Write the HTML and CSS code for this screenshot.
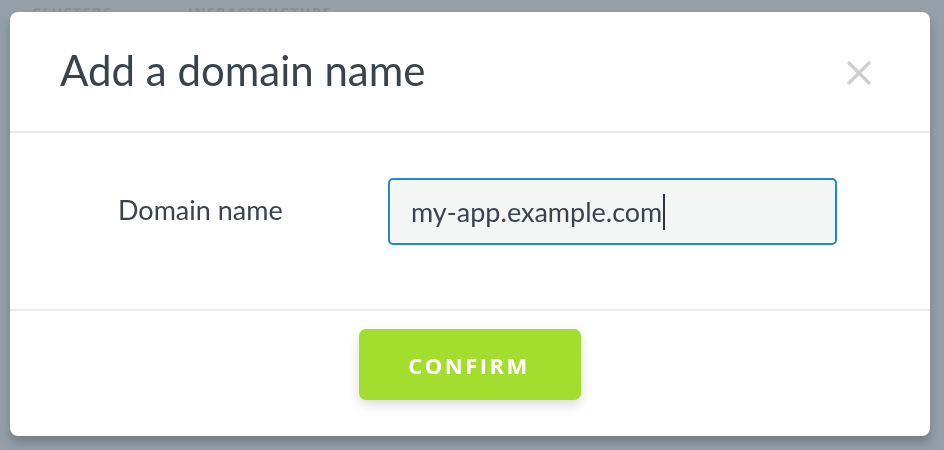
FILE: index.html
```html
<!DOCTYPE html>
<html lang="en">
<head>
<meta charset="utf-8">
<title>Add a domain name</title>
<link rel="stylesheet" href="styles.css">
</head>
<body>
<div class="page">
  <nav class="tabs">
    <span class="tab tab-clusters">CLUSTERS</span>
    <span class="tab">INFRASTRUCTURE</span>
  </nav>
</div>
<div class="overlay">
  <div class="modal" role="dialog" aria-labelledby="modal-title">
    <header class="modal-header">
      <h2 id="modal-title" class="modal-title">Add a domain name</h2>
      <button class="close" aria-label="Close">
        <svg width="26" height="26" viewBox="0 0 26 26"><path d="M2 2 L24 24 M24 2 L2 24" stroke="#cfcfd1" stroke-width="3.2" fill="none"/></svg>
      </button>
    </header>
    <div class="modal-body">
      <div class="form-row">
        <label class="field-label">Domain name</label>
        <div class="field-input" role="textbox">my-app.example.com<span class="caret"></span></div>
      </div>
    </div>
    <footer class="modal-footer">
      <button class="btn-confirm">CONFIRM</button>
    </footer>
  </div>
</div>
</body>
</html>
```

FILE: styles.css
```css
* { box-sizing: border-box; }
html, body {
  margin: 0;
  padding: 0;
  width: 944px;
  height: 450px;
  overflow: hidden;
}
body {
  background: #949faa;
  font-family: Lato, "Open Sans", sans-serif;
}
.page {
  padding: 0 0 0 32px;
}
.tabs {
  display: flex;
  padding-top: 6px;
}
.tab {
  font-family: "Open Sans", sans-serif;
  font-weight: 700;
  font-size: 14px;
  line-height: 1;
  letter-spacing: 1.5px;
  color: #86919c;
}
.tab-clusters {
  width: 156px;
}
.overlay {
  position: fixed;
  inset: 0;
  padding: 12px 0 0 10px;
}
.modal {
  width: 920px;
  height: 424px;
  background: #fff;
  border-radius: 8px;
  box-shadow: 0 7px 10px rgba(60, 70, 80, 0.35);
  display: flex;
  flex-direction: column;
}
.modal-header {
  height: 121px;
  border-bottom: 2px solid #ebebef;
  display: flex;
  align-items: center;
  justify-content: space-between;
  padding: 0 58px 0 50px;
}
.modal-title {
  margin: 0;
  font-weight: 400;
  font-size: 42px;
  color: #3a424c;
  letter-spacing: 0;
  padding-bottom: 4px;
}
.close {
  border: 0;
  background: none;
  padding: 0;
  display: flex;
  margin-top: 2px;
}
.modal-body {
  height: 178px;
  border-bottom: 2px solid #ebebef;
  padding: 45px 92px 0 108px;
}
.form-row {
  display: flex;
  align-items: center;
}
.field-label {
  width: 270px;
  font-size: 27px;
  color: #3a434e;
  padding-bottom: 4px;
}
.field-input {
  width: 449px;
  height: 67px;
  border: 2px solid #1e8bc3;
  border-radius: 5px;
  background: #f4f5f5;
  display: flex;
  align-items: center;
  padding-left: 21px;
  font-size: 27px;
  color: #3a434e;
}
.caret {
  display: inline-block;
  width: 2px;
  height: 36px;
  background: #2d343c;
  margin-left: 1px;
}
.modal-footer {
  flex: 1;
  display: flex;
  justify-content: center;
  align-items: flex-start;
  padding-top: 18px;
}
.btn-confirm {
  width: 222px;
  height: 71px;
  border: 0;
  border-radius: 7px;
  background: #a3dd2e;
  color: #fff;
  font-family: "Open Sans", sans-serif;
  font-weight: 700;
  font-size: 22px;
  letter-spacing: 2.5px;
  box-shadow: 0 5px 12px rgba(0, 0, 0, 0.14);
  padding-left: 4px;
}
```
